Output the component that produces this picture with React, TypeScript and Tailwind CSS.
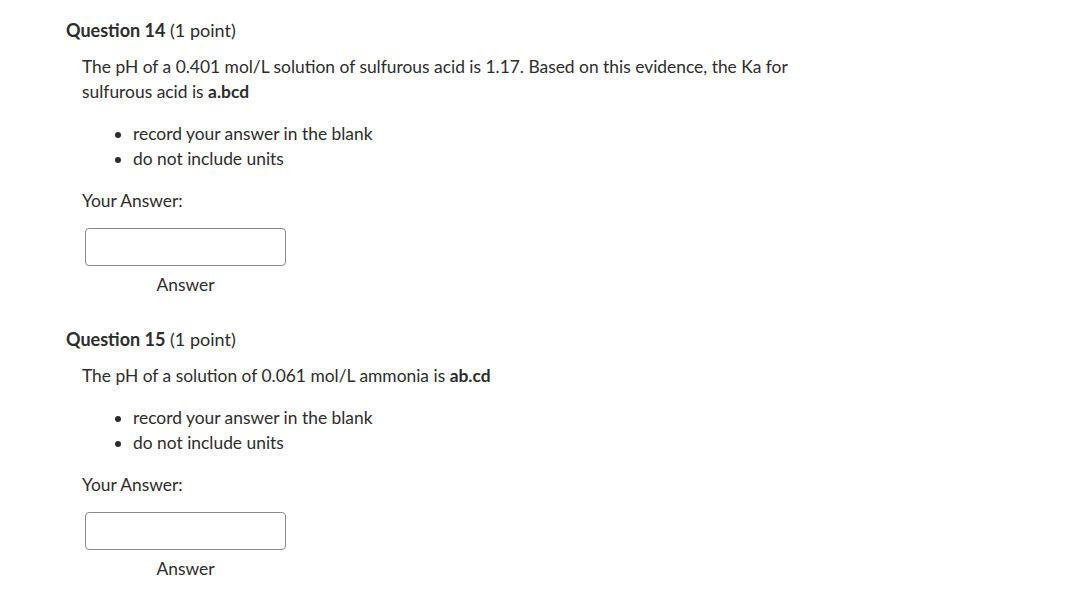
const font = { fontFamily: "Lato, 'Open Sans', sans-serif" };

type Q = {
  num: number;
  body: React.ReactNode;
};

function Question({ num, body }: Q) {
  return (
    <div className="pl-[66px]">
      <h2 className="text-[18px] leading-[24px] text-[#2d2d2d]">
        <span className="font-bold">Question {num}</span> (1 point)
      </h2>
      <div className="pl-4 pt-[12px] text-[17.4px] leading-[25px] text-[#2d2d2d]">
        <p className="max-w-[730px]">{body}</p>
        <ul className="list-disc pl-[51px] pt-[17px]">
          <li>record your answer in the blank</li>
          <li>do not include units</li>
        </ul>
        <p className="pt-[17px]">Your Answer:</p>
        <div className="w-[201px] ml-[3px] mt-[15px] flex flex-col items-center">
          <input
            type="text"
            className="w-[201px] h-[38px] border border-[#8a8a8a] rounded-[4px] bg-white outline-none"
          />
          <span className="pt-[6px]">Answer</span>
        </div>
      </div>
    </div>
  );
}

export default function App() {
  return (
    <div style={font} className="bg-white w-[1085px] h-[607px] pt-[18px] overflow-hidden">
      <Question
        num={14}
        body={
          <>
            The pH of a 0.401 mol/L solution of sulfurous acid is 1.17. Based on this evidence, the Ka for
            sulfurous acid is <b>a.bcd</b>
          </>
        }
      />
      <div className="h-[30px]" />
      <Question
        num={15}
        body={
          <>
            The pH of a solution of 0.061 mol/L ammonia is <b>ab.cd</b>
          </>
        }
      />
    </div>
  );
}
